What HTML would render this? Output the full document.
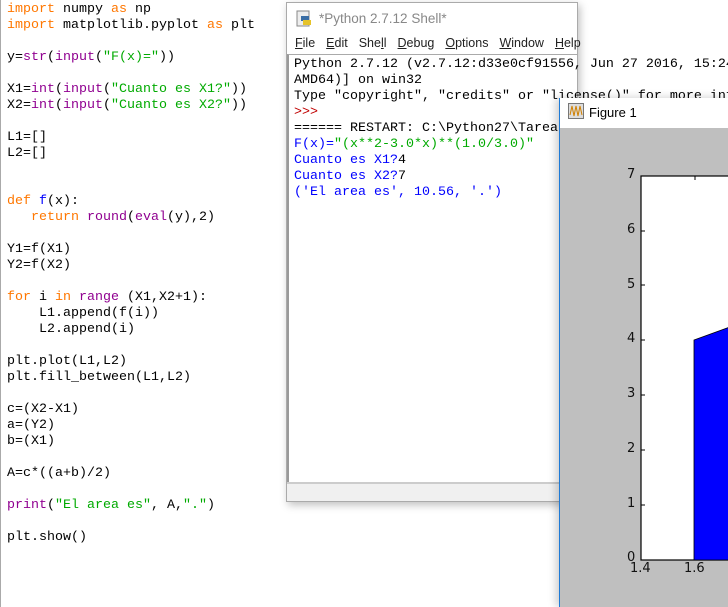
<!DOCTYPE html>
<html><head><style>
body{margin:0;width:728px;height:607px;position:relative;overflow:hidden;background:#fff;font-family:"Liberation Sans",sans-serif}
.mono{font-family:"Liberation Mono",monospace;font-size:13.33px;line-height:16px;white-space:pre}
#ed{position:absolute;left:0;top:0;width:286px;height:607px;border-left:1px solid #aaa;background:#fff}
#ed .mono{position:absolute;left:6px;top:2px;color:#000}
.k{color:#ff7700}.b{color:#900090}.s{color:#00aa00}.f{color:#0000ff}.o{color:#000}
#sh{position:absolute;left:286px;top:2px;width:290px;height:498px;border:1px solid #aaa;background:#fff;box-shadow:2px 3px 8px rgba(0,0,0,.25)}
#sh .title{position:absolute;left:32px;top:8px;font-size:13.5px;color:#888}
#sh .menu{position:absolute;left:8px;top:33px;font-size:12.5px;color:#222;word-spacing:0}
#sh .menu span{margin-right:11px}
#sh .txt{position:absolute;left:0;top:51px;right:0;height:429px;border-top:1px solid #aaa;border-left:2px solid #999}
#sh .txt .mono{position:absolute;left:5px;top:2px}
#sh .stat{position:absolute;left:0;right:0;bottom:0;height:17px;background:#f0f0f0;border-top:2px solid #ccc}
#fig{position:absolute;left:559px;top:98px;width:169px;height:509px;border-left:1px solid #1e7ad6;background:#bfbfbf;box-shadow:-3px 0 8px rgba(0,0,0,.2)}
#fig .tb{position:absolute;left:0;top:0;right:0;height:30px;background:#fff}
.lbl{position:absolute;font-size:13px;color:#111;font-family:"DejaVu Sans",sans-serif}
</style></head><body>
<div id="ed"><div class="mono"><span class="k">import</span> numpy <span class="k">as</span> np
<span class="k">import</span> matplotlib.pyplot <span class="k">as</span> plt

y=<span class="b">str</span>(<span class="b">input</span>(<span class="s">"F(x)="</span>))

X1=<span class="b">int</span>(<span class="b">input</span>(<span class="s">"Cuanto es X1?"</span>))
X2=<span class="b">int</span>(<span class="b">input</span>(<span class="s">"Cuanto es X2?"</span>))

L1=[]
L2=[]


<span class="k">def</span> <span class="f">f</span>(x):
   <span class="k">return</span> <span class="b">round</span>(<span class="b">eval</span>(y),2)

Y1=f(X1)
Y2=f(X2)

<span class="k">for</span> i <span class="k">in</span> <span class="b">range</span> (X1,X2+1):
    L1.append(f(i))
    L2.append(i)

plt.plot(L1,L2)
plt.fill_between(L1,L2)

c=(X2-X1)
a=(Y2)
b=(X1)

A=c*((a+b)/2)

<span class="b">print</span>(<span class="s">"El area es"</span>, A,<span class="s">"."</span>)

plt.show()</div></div>

<div id="sh">
<svg style="position:absolute;left:9px;top:7px" width="16" height="18"><rect x="1" y="1" width="12" height="15" fill="#eee" stroke="#888"/><rect x="5" y="6" width="8" height="5" fill="#3a6ea5"/><rect x="7" y="10" width="8" height="5" fill="#e6c32a"/></svg>
<div class="title">*Python 2.7.12 Shell*</div>
<div class="menu"><span><u>F</u>ile</span><span><u>E</u>dit</span><span>She<u>l</u>l</span><span><u>D</u>ebug</span><span><u>O</u>ptions</span><span><u>W</u>indow</span><span><u>H</u>elp</span></div>
<div class="txt"><div class="mono">Python 2.7.12 (v2.7.12:d33e0cf91556, Jun 27 2016, 15:24
AMD64)] on win32
Type "copyright", "credits" or "license()" for more info
<span style="color:#c00000">&gt;&gt;&gt;</span>
====== RESTART: C:\Python27\Tarea
<span class="f">F(x)=</span><span class="s">"(x**2-3.0*x)**(1.0/3.0)"</span>
<span class="f">Cuanto es X1?</span>4
<span class="f">Cuanto es X2?</span>7
<span class="f">('El area es', 10.56, '.')</span></div></div>
<div class="stat"></div>
</div>

<div id="fig">
<div class="tb"></div>
<svg style="position:absolute;left:8px;top:5px" width="17" height="17"><rect x="0.5" y="0.5" width="15" height="15" fill="#ddd" stroke="#777"/><path d="M2 12 L4 3 L6 13 L8 3 L10 13 L12 3 L14 12" fill="none" stroke="#d08000" stroke-width="1"/></svg>
<div style="position:absolute;left:29px;top:7px;font-size:13px;color:#000">Figure 1</div>
<svg style="position:absolute;left:0;top:0" width="169" height="509">
<rect x="81" y="78" width="100" height="384" fill="#fff" stroke="#000" stroke-width="1.2"/>
<polygon points="134,462 134,242 170,229 170,462" fill="#0000ff" stroke="#000" stroke-width="0.8"/>
<g stroke="#000"><line x1="81" y1="133" x2="85" y2="133"/><line x1="81" y1="187" x2="85" y2="187"/><line x1="81" y1="242" x2="85" y2="242"/><line x1="81" y1="297" x2="85" y2="297"/><line x1="81" y1="352" x2="85" y2="352"/><line x1="81" y1="407" x2="85" y2="407"/><line x1="135" y1="78" x2="135" y2="82"/></g>
</svg>
<div class="lbl" style="left:67px;top:69px">7</div>
<div class="lbl" style="left:67px;top:124px">6</div>
<div class="lbl" style="left:67px;top:179px">5</div>
<div class="lbl" style="left:67px;top:233px">4</div>
<div class="lbl" style="left:67px;top:288px">3</div>
<div class="lbl" style="left:67px;top:343px">2</div>
<div class="lbl" style="left:67px;top:398px">1</div>
<div class="lbl" style="left:67px;top:452px">0</div>
<div class="lbl" style="left:70px;top:463px">1.4</div>
<div class="lbl" style="left:124px;top:463px">1.6</div>
</div>
</body></html>
